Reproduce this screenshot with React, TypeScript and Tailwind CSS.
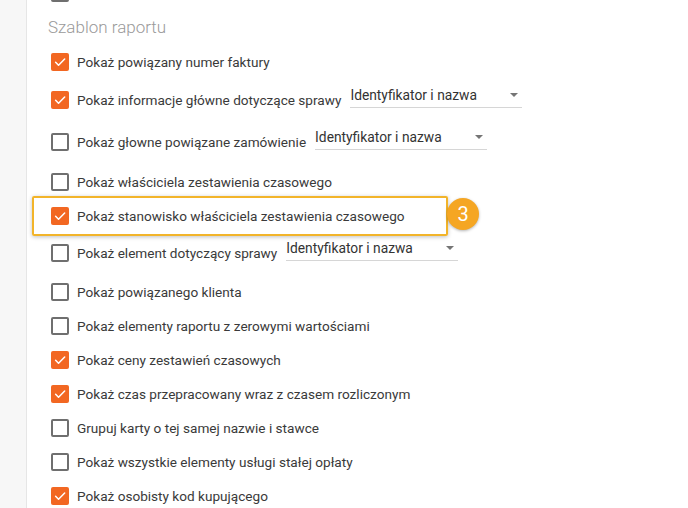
import React from "react";

type Row = {
  label: string;
  checked: boolean;
  select?: number; // width of select
  highlight?: boolean;
};

const rows: Row[] = [
  { label: "Pokaż powiązany numer faktury", checked: true },
  { label: "Pokaż informacje główne dotyczące sprawy", checked: true, select: 172 },
  { label: "Pokaż głowne powiązane zamówienie", checked: false, select: 172 },
  { label: "Pokaż właściciela zestawienia czasowego", checked: false },
  { label: "Pokaż stanowisko właściciela zestawienia czasowego", checked: true, highlight: true },
  { label: "Pokaż element dotyczący sprawy", checked: false, select: 172 },
  { label: "Pokaż powiązanego klienta", checked: false },
  { label: "Pokaż elementy raportu z zerowymi wartościami", checked: false },
  { label: "Pokaż ceny zestawień czasowych", checked: true },
  { label: "Pokaż czas przepracowany wraz z czasem rozliczonym", checked: true },
  { label: "Grupuj karty o tej samej nazwie i stawce", checked: false },
  { label: "Pokaż wszystkie elementy usługi stałej opłaty", checked: false },
  { label: "Pokaż osobisty kod kupującego", checked: true },
];

// extra spacing above each row (rows are 34px tall)
const gaps = [0, 4, 8, 6, 0, 3, 5, 0, 0, 0, 0, 0, 0];

function Checkbox({ checked }: { checked: boolean }) {
  if (checked) {
    return (
      <span className="flex h-[18px] w-[18px] shrink-0 items-center justify-center rounded-[2px] bg-[#f26722]">
        <svg width="14" height="14" viewBox="0 0 24 24" fill="none">
          <path d="M4.5 12.5l5 5L20 7" stroke="white" strokeWidth="2.6" strokeLinecap="round" strokeLinejoin="round" />
        </svg>
      </span>
    );
  }
  return <span className="h-[18px] w-[18px] shrink-0 rounded-[2px] border-2 border-[#6f6f6f] bg-white" />;
}

function Select({ width }: { width: number }) {
  return (
    <div
      className="relative -mt-[10px] ml-[9px] flex h-[26px] items-start border-b border-[#d6d6d6] text-[13.8px] text-[#333]"
      style={{ width }}
    >
      <span className="leading-[26px]">Identyfikator i nazwa</span>
      <span className="absolute right-[4px] top-[11px] h-0 w-0 border-x-[4px] border-t-[4px] border-x-transparent border-t-[#757575]" />
    </div>
  );
}

export default function App() {
  return (
    <div
      className="flex h-[508px] w-[688px] overflow-hidden bg-white"
      style={{ fontFamily: "Roboto, 'Noto Sans', sans-serif" }}
    >
      <div className="h-full w-[27px] shrink-0 border-r border-[#e6e6e6] bg-[#f7f7f7]" />
      <div className="relative flex flex-1 flex-col pl-[24px]">
        <div className="-mt-[16px] h-[18px] w-[18px] shrink-0 rounded-[2px] border-2 border-[#6f6f6f]" />
        <div className="-ml-[3px] mt-[12px] h-[26px] shrink-0 text-[17px] leading-[26px] font-light text-[#9a9a9a]">
          Szablon raportu
        </div>
        <div className="mt-[5px] flex flex-col">
          {rows.map((r, i) => (
            <div key={i} className="flex h-[34px] shrink-0 items-center" style={{ marginTop: gaps[i] }}>
              {r.highlight ? (
                <div className="relative -ml-[19px] flex h-[40px] w-[416px] items-center rounded-[2px] border-2 border-[#f2b42a] pl-[17px] shadow-[0_1px_4px_rgba(0,0,0,0.25)]">
                  <Checkbox checked={r.checked} />
                  <span className="ml-[8px] text-[13.6px] text-[#3a3a3a]">{r.label}</span>
                  <span className="absolute -right-[33px] top-[0px] flex h-[32px] w-[32px] items-center justify-center rounded-full bg-[#f5a623] text-[20px] text-white shadow-[0_1px_3px_rgba(0,0,0,0.3)]">
                    3
                  </span>
                </div>
              ) : (
                <>
                  <Checkbox checked={r.checked} />
                  <span className="ml-[8px] whitespace-nowrap text-[13.6px] text-[#3a3a3a]">{r.label}</span>
                  {r.select && <Select width={r.select} />}
                </>
              )}
            </div>
          ))}
        </div>
      </div>
    </div>
  );
}
